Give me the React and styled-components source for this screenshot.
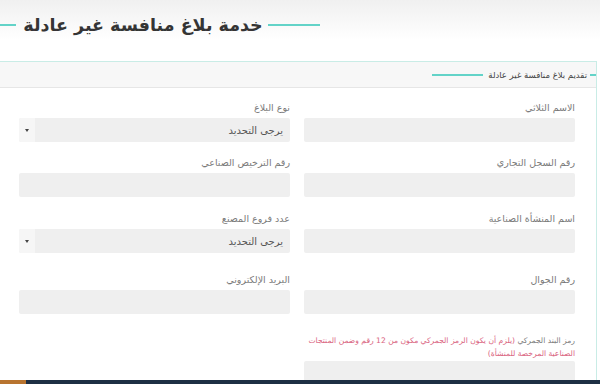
import React from "react";
import styled, { createGlobalStyle } from "styled-components";

const Global = createGlobalStyle`
  html, body { margin: 0; padding: 0; background: #ffffff; }
  body { font-family: "DejaVu Sans", "Noto Sans", sans-serif; }
  * { box-sizing: border-box; }
`;

const Page = styled.div`
  width: 600px;
  height: 384px;
  display: flex;
  flex-direction: column;
  overflow: hidden;
  background: #fff;
`;

const Main = styled.div`
  flex: 1;
  overflow: hidden;
  background: linear-gradient(#f0f0f0 0px, #ffffff 40px);
`;

const TitleRow = styled.div`
  display: flex;
  align-items: center;
  width: 320px;
  height: 30px;
  margin-top: 10px;
`;

const TealLine = styled.span`
  display: block;
  height: 2px;
  background: #63d3c8;
  width: ${(p) => p.$w}px;
  flex: none;
`;

const Title = styled.h1`
  margin: 0 5px 0 7px;
  font-size: 17.5px;
  font-weight: bold;
  color: #353535;
  white-space: nowrap;
  direction: rtl;
  flex: 1;
  text-align: center;
  line-height: 30px;
`;

const Panel = styled.section`
  margin-top: 21px;
  width: 597px;
  border-top: 1px solid #c9ece6;
  border-right: 1px solid #c9ece6;
  background: #fff;
  direction: rtl;
  height: 400px;
`;

const PanelHead = styled.div`
  height: 26px;
  background: #f7f7f7;
  border-bottom: 1px solid #e6e6e6;
  display: flex;
  align-items: center;
`;

const HeadText = styled.span`
  font-size: 8.5px;
  color: #444;
  margin: 0 3px;
  white-space: nowrap;
`;

const PanelBody = styled.div`
  padding: 13px 21px 0 19px;
`;

const Row = styled.div`
  display: grid;
  grid-template-columns: 271px 271px;
  column-gap: 14px;
  margin-top: ${(p) => p.$top || 0}px;
`;

const Field = styled.div`
  display: flex;
  flex-direction: column;
`;

const Label = styled.label`
  font-size: 9.5px;
  line-height: 14px;
  color: #7a7a7a;
  margin-bottom: 3px;
  text-align: right;
`;

const LongLabel = styled(Label)`
  font-size: 7.6px;
  line-height: 13px;
  margin-bottom: 1px;
  white-space: nowrap;
`;

const Note = styled.span`
  color: #d9627e;
`;

const Input = styled.div`
  height: 24px;
  background: #efefef;
  border-radius: 2px;
`;

const Select = styled.div`
  height: 24px;
  background: #efefef;
  border-radius: 2px;
  display: flex;
  align-items: center;
  justify-content: space-between;
  padding-right: 7px;
  font-size: 10px;
  color: #555;
`;

const ArrowBox = styled.span`
  width: 16px;
  height: 24px;
  background: #f6f6f6;
  border-radius: 2px 0 0 2px;
  display: flex;
  align-items: center;
  justify-content: center;
  &::after {
    content: "";
    border-left: 2px solid transparent;
    border-right: 2px solid transparent;
    border-top: 3px solid #444;
  }
`;

const Footer = styled.footer`
  height: 4px;
  flex: none;
  display: flex;
  background: #1d2f44;
`;

const FooterAccent = styled.span`
  width: 26px;
  background: #b8742f;
`;

function TextField({ label }) {
  return (
    <Field>
      <Label>{label}</Label>
      <Input />
    </Field>
  );
}

function SelectField({ label }) {
  return (
    <Field>
      <Label>{label}</Label>
      <Select>
        <span>يرجى التحديد</span>
        <ArrowBox />
      </Select>
    </Field>
  );
}

export default function App() {
  return (
    <>
      <Global />
      <Page>
        <Main>
          <TitleRow>
            <TealLine $w={16} />
            <Title>خدمة بلاغ منافسة غير عادلة</Title>
            <TealLine $w={52} />
          </TitleRow>
          <Panel>
            <PanelHead>
              <TealLine $w={6} />
              <HeadText>تقديم بلاغ منافسة غير عادلة</HeadText>
              <TealLine $w={51} style={{ marginRight: 2 }} />
            </PanelHead>
            <PanelBody>
              <Row>
                <TextField label="الاسم الثلاثي" />
                <SelectField label="نوع البلاغ" />
              </Row>
              <Row $top={14}>
                <TextField label="رقم السجل التجاري" />
                <TextField label="رقم الترخيص الصناعي" />
              </Row>
              <Row $top={15}>
                <TextField label="اسم المنشأة الصناعية" />
                <SelectField label="عدد فروع المصنع" />
              </Row>
              <Row $top={20}>
                <TextField label="رقم الجوال" />
                <TextField label="البريد الإلكتروني" />
              </Row>
              <Row $top={20}>
                <Field>
                  <LongLabel>
                    رمز البند الجمركي{" "}
                    <Note>(يلزم أن يكون الرمز الجمركي مكون من 12 رقم وضمن المنتجات</Note>
                    <br />
                    <Note>الصناعية المرخصة للمنشأة)</Note>
                  </LongLabel>
                  <Input />
                </Field>
              </Row>
            </PanelBody>
          </Panel>
        </Main>
        <Footer>
          <FooterAccent />
        </Footer>
      </Page>
    </>
  );
}
